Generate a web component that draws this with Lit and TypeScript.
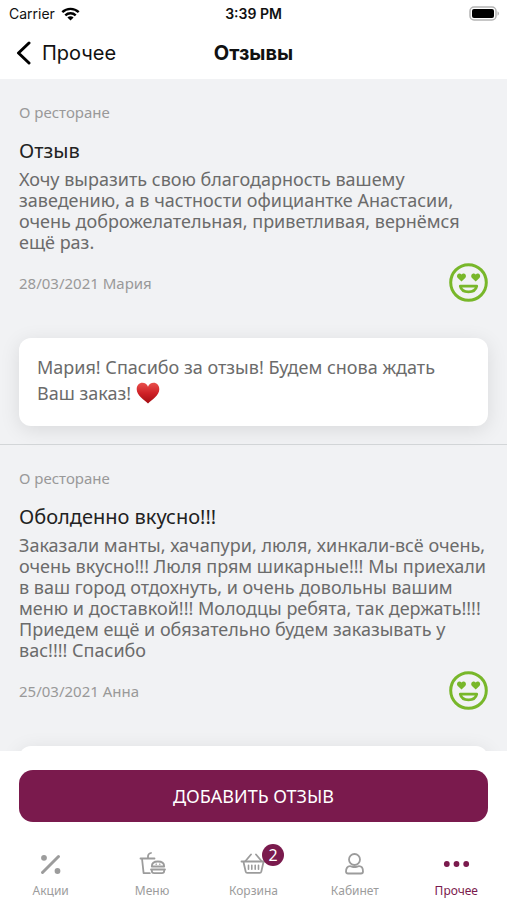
import { LitElement, html, css, svg, nothing } from "lit";
import { customElement, property } from "lit/decorators.js";

interface Review {
  topic: string;
  title: string;
  text: string;
  date: string;
  author: string;
  reply: string;
  loved: boolean;
}

const reviews: Review[] = [
  {
    topic: "О ресторане",
    title: "Отзыв",
    text: "Хочу выразить свою благодарность вашему заведению, а в частности официантке Анастасии, очень доброжелательная, приветливая, вернёмся ещё раз.",
    date: "28/03/2021",
    author: "Мария",
    reply: "Мария! Спасибо за отзыв! Будем снова ждать Ваш заказ!",
    loved: true,
  },
  {
    topic: "О ресторане",
    title: "Оболденно вкусно!!!",
    text: "Заказали манты, хачапури, люля, хинкали-всё очень, очень вкусно!!! Люля прям шикарные!!! Мы приехали в ваш город отдохнуть, и очень довольны вашим меню и доставкой!!! Молодцы ребята, так держать!!!! Приедем ещё и обязательно будем заказывать у вас!!!! Спасибо",
    date: "25/03/2021",
    author: "Анна",
    reply: "",
    loved: false,
  },
];

const percentIcon = svg`
  <path d="M5.500 20.500 21.500 4.500" stroke-width="3" />
  <circle cx="7" cy="5.800" r="2.900" fill="currentColor" stroke="none" />
  <circle cx="20.500" cy="19" r="2.900" fill="currentColor" stroke="none" />`;

const menuIcon = svg`
  <path d="M1.500 6.500h14M3 6.500l1.600 14.700h6.200M9 6.500V4.200c0-1.600 1-2.700 3-3.200" />
  <path d="M12.800 14.500c0-3.300 2.400-5 6.100-5s6.300 1.700 6.300 5z" />
  <path d="M12 17.500h14" />
  <path d="M12.800 18v.8c0 1.600 1 2.400 2.400 2.400h7.600c1.400 0 2.400-.8 2.400-2.400V18" />
  <path d="M17 12.200h.5M20.500 12.200h.5" stroke-width="1.200" />`;

const basketIcon = svg`
  <path d="M1.500 9.500h24M3.500 10l2.200 9.600c.2.800.7 1.200 1.500 1.200h12.600c.8 0 1.300-.4 1.500-1.200L23.500 10" />
  <path d="M5.500 9 11 2.500M21.500 9 16 2.500" />
  <path d="M8.500 13.200v4M11.800 13.200v4M15.200 13.200v4M18.500 13.200v4" stroke-width="1.600" />`;

const personIcon = svg`
  <circle cx="13.500" cy="7.500" r="5.500" />
  <path d="M5 19.500c0-3.300 1.500-5.300 4-5.300 1.400 0 2.300.8 4.500.8s3.100-.8 4.500-.8c2.500 0 4 2 4 5.300 0 1.300-.8 2-2 2H7c-1.200 0-2-.7-2-2z" />`;

const dotsIcon = svg`
  <g fill="currentColor" stroke="none">
    <circle cx="3.800" cy="12" r="2.900" />
    <circle cx="13.500" cy="12" r="2.900" />
    <circle cx="23.200" cy="12" r="2.900" />
  </g>`;

const tabs = [
  { label: "Акции", icon: percentIcon, badge: 0, active: false },
  { label: "Меню", icon: menuIcon, badge: 0, active: false },
  { label: "Корзина", icon: basketIcon, badge: 2, active: false },
  { label: "Кабинет", icon: personIcon, badge: 0, active: false },
  { label: "Прочее", icon: dotsIcon, badge: 0, active: true },
];

@customElement("status-bar")
class StatusBar extends LitElement {
  static styles = css`
    :host {
      display: grid;
      grid-template-columns: 1fr auto 1fr;
      align-items: center;
      height: 27px;
      padding: 0 7px;
      font-family: Inter, "Liberation Sans", sans-serif;
      font-size: 14px;
      color: #111;
    }
    .carrier {
      display: flex;
      align-items: center;
      gap: 6px;
      padding-left: 2px;
    }
    .time {
      font-weight: 600;
    }
    .battery {
      justify-self: end;
    }
    svg {
      display: block;
    }
  `;

  render() {
    return html`
      <div class="carrier">
        <span>Carrier</span>
        <svg width="19" height="14" viewBox="0 0 19 14" fill="none" stroke="#000" stroke-width="2.400">
          <path d="M1.300 5.200a11.700 11.700 0 0 1 16.400 0" />
          <path d="M4.300 8.400a7.400 7.400 0 0 1 10.400 0" />
          <path d="M9.500 13.600 6.400 10.500a4.400 4.400 0 0 1 6.200 0z" fill="#000" stroke="none" />
        </svg>
      </div>
      <div class="time">3:39 PM</div>
      <svg class="battery" width="31" height="15" viewBox="0 0 31 15">
        <rect x="1" y="1" width="26" height="13" rx="4" fill="#fff" stroke="#b4b4b4" stroke-width="1.500" />
        <rect x="3" y="3" width="22" height="9" rx="2" fill="#000" />
        <path d="M28.500 5.300c2 .8 2 3.600 0 4.400z" fill="#b4b4b4" />
      </svg>
    `;
  }
}

@customElement("review-item")
class ReviewItem extends LitElement {
  @property({ attribute: false }) review!: Review;

  static styles = css`
    :host {
      display: block;
      padding: 22px 19px 18px;
      border-bottom: 1px solid #d3d6d8;
    }
    .topic,
    .meta {
      font-size: 15px;
      line-height: 22px;
      color: #999;
    }
    .topic {
      margin: 0 0 15px;
    }
    .title {
      margin: 0 0 5px;
      font-size: 20px;
      line-height: 26px;
      font-weight: 400;
      color: #222;
    }
    .text {
      margin: 0 0 10px;
      font-size: 18px;
      line-height: 21px;
      color: #6b6b6b;
    }
    .row {
      display: flex;
      align-items: center;
      justify-content: space-between;
      margin-bottom: 36px;
    }
    .smile {
      display: block;
    }
    .reply {
      min-height: 52px;
      padding: 16px 18px 20px;
      border-radius: 12px;
      background: #fff;
      box-shadow: 0 4px 20px rgba(0, 0, 0, 0.1);
      font-size: 18px;
      line-height: 26px;
      color: #6b6b6b;
    }
    .heart {
      vertical-align: -4px;
    }
  `;

  render() {
    const r = this.review;
    return html`
      <p class="topic">${r.topic}</p>
      <h2 class="title">${r.title}</h2>
      <p class="text">${r.text}</p>
      <div class="row">
        <span class="meta">${r.date} ${r.author}</span>
        <svg class="smile" width="39" height="39" viewBox="0 0 39 39" role="img" aria-label="Отлично">
          <circle cx="19.500" cy="19.500" r="17.800" fill="none" stroke="#78b72a" stroke-width="3" />
          <g fill="#78b72a">
            <path d="M12.500 18.500 8.800 15c-2.400-3 1.300-6.200 3.700-3.600 2.400-2.600 6.100.6 3.700 3.600z" />
            <path d="M26.700 18.500 23 15c-2.400-3 1.300-6.200 3.700-3.600 2.400-2.600 6.100.6 3.700 3.600z" />
          </g>
          <path d="M11.300 23.200h16.400c-.8 3.700-3.800 5.600-8.200 5.600s-7.400-1.900-8.200-5.600z" fill="none" stroke="#78b72a" stroke-width="2.800" stroke-linejoin="round" />
        </svg>
      </div>
      <div class="reply">
        ${r.reply}
        ${r.loved
          ? html`<svg class="heart" width="24" height="22" viewBox="0 0 24 22" role="img" aria-label="Сердце">
              <defs>
                <linearGradient id="red" x1="0" y1="0" x2="0" y2="1">
                  <stop offset="0" stop-color="#e8504c" />
                  <stop offset="0.5" stop-color="#cf2127" />
                  <stop offset="1" stop-color="#a30d12" />
                </linearGradient>
              </defs>
              <path d="M12 21.500C8 17.500.7 13.500.7 7.200.7 3.400 3.200.8 6.400.8c2.600 0 4.600 1.400 5.600 3.900C13 2.200 15 .8 17.600.8c3.200 0 5.700 2.600 5.700 6.400 0 6.300-7.300 10.300-11.300 14.300z" fill="url(#red)" />
            </svg>`
          : nothing}
      </div>
    `;
  }
}

@customElement("tab-bar")
class TabBar extends LitElement {
  static styles = css`
    :host {
      display: block;
    }
    .tabs {
      display: grid;
      grid-template-columns: repeat(5, 1fr);
    }
    .tab {
      display: flex;
      flex-direction: column;
      align-items: center;
      gap: 7px;
      font-size: 12px;
      line-height: 16px;
      color: #9c9c9c;
      text-decoration: none;
    }
    .active {
      color: #7a1a4d;
    }
    .icon {
      position: relative;
      height: 24px;
    }
    svg {
      display: block;
    }
    .badge {
      position: absolute;
      left: 22px;
      top: -8px;
      width: 22px;
      height: 22px;
      border-radius: 50%;
      background: #7a1a4d;
      color: #fff;
      font-size: 16px;
      line-height: 22px;
      text-align: center;
    }
  `;

  render() {
    return html`
      <nav class="tabs">
        ${tabs.map(
          (t) => html`
            <a class="tab ${t.active ? "active" : ""}" href="#">
              <span class="icon">
                <svg width="27" height="24" viewBox="0 0 27 24" fill="none" stroke="currentColor" stroke-width="1.800" stroke-linecap="round" stroke-linejoin="round">
                  ${t.icon}
                </svg>
                ${t.badge ? html`<span class="badge">${t.badge}</span>` : nothing}
              </span>
              <span>${t.label}</span>
            </a>
          `
        )}
      </nav>
    `;
  }
}

@customElement("app-root")
class AppRoot extends LitElement {
  static styles = css`
    :host {
      display: flex;
      flex-direction: column;
      height: 100vh;
      background: #fff;
      font-family: "Noto Sans", "Open Sans", sans-serif;
    }
    .nav {
      display: grid;
      grid-template-columns: 1fr auto 1fr;
      align-items: center;
      height: 52px;
      padding: 0 15px;
      font-family: Inter, "Liberation Sans", sans-serif;
      color: #111;
    }
    .back {
      display: flex;
      align-items: center;
      gap: 10px;
      padding: 0;
      border: 0;
      background: none;
      font: inherit;
      font-size: 20px;
      color: inherit;
    }
    .heading {
      margin: 0;
      font-size: 20px;
      font-weight: 700;
    }
    .list {
      flex: 1;
      min-height: 0;
      overflow: auto;
      scrollbar-width: none;
      background: #f1f2f4;
    }
    .bottom {
      padding: 19px 0 1px;
      background: #fff;
    }
    .action {
      padding: 0 19px 30px;
    }
    .add {
      display: block;
      width: 100%;
      height: 52px;
      border: 0;
      border-radius: 14px;
      background: #7a1a4d;
      color: #fff;
      font: inherit;
      font-size: 18px;
    }
  `;

  render() {
    return html`
      <status-bar></status-bar>
      <header class="nav">
        <button class="back" type="button">
          <svg width="17" height="24" viewBox="0 0 17 24" fill="none" stroke="#000" stroke-width="3" stroke-linecap="round" stroke-linejoin="round">
            <path d="M14 2 3.500 12 14 22" />
          </svg>
          Прочее
        </button>
        <h1 class="heading">Отзывы</h1>
      </header>
      <main class="list">
        ${reviews.map((r) => html`<review-item .review=${r}></review-item>`)}
      </main>
      <footer class="bottom">
        <div class="action">
          <button class="add" type="button">ДОБАВИТЬ ОТЗЫВ</button>
        </div>
        <tab-bar></tab-bar>
      </footer>
    `;
  }
}
